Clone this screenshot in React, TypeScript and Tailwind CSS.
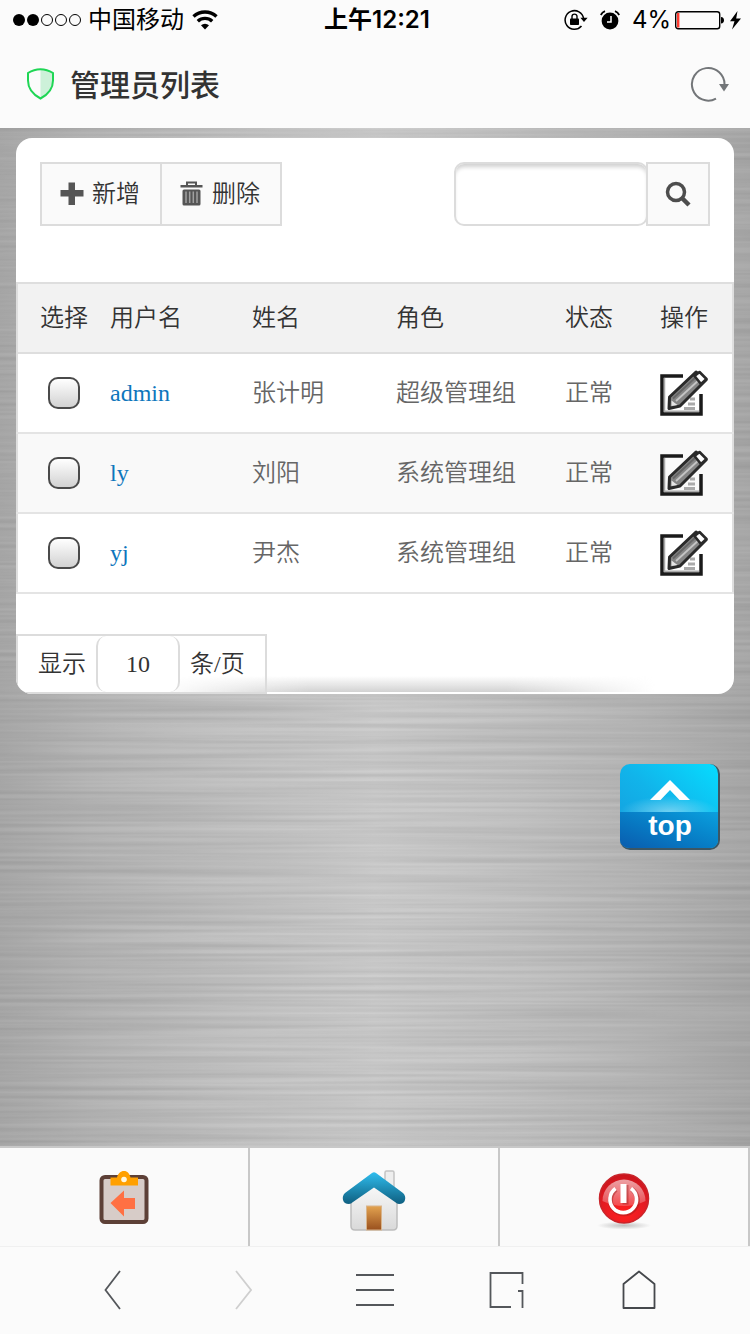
import { useState } from "react";

type User = { login: string; name: string; role: string; status: string };

const USERS: User[] = [
  { login: "admin", name: "张计明", role: "超级管理组", status: "正常" },
  { login: "ly", name: "刘阳", role: "系统管理组", status: "正常" },
  { login: "yj", name: "尹杰", role: "系统管理组", status: "正常" },
];

function BrushedMetal() {
  return (
    <svg className="absolute inset-0 h-full w-full" aria-hidden="true">
      <defs>
        <linearGradient id="metal" x1="0" y1="0" x2="1" y2="0">
          <stop offset="0" stopColor="#ababab" />
          <stop offset="0.12" stopColor="#b7b7b7" />
          <stop offset="0.3" stopColor="#c3c3c3" />
          <stop offset="0.5" stopColor="#cecece" />
          <stop offset="0.7" stopColor="#c3c3c3" />
          <stop offset="0.88" stopColor="#b6b6b6" />
          <stop offset="1" stopColor="#ababab" />
        </linearGradient>
        <filter id="brush" x="0" y="0" width="100%" height="100%" colorInterpolationFilters="sRGB">
          <feTurbulence type="fractalNoise" baseFrequency="0.003 0.24" numOctaves="2" seed="4" />
          <feColorMatrix values="0 0 0 0 0.35  0 0 0 0 0.35  0 0 0 0 0.35  0.3 0 0 0 -0.08" />
        </filter>
      </defs>
      <rect width="100%" height="100%" fill="url(#metal)" />
      <rect width="100%" height="100%" filter="url(#brush)" />
    </svg>
  );
}

function StatusBar() {
  return (
    <div className="relative flex h-10 items-center justify-between pl-3 pr-2 font-['Inter','Noto_Sans_CJK_SC',sans-serif] text-2xl text-black">
      <div className="flex items-center">
        <svg width="70" height="14" viewBox="0 0 70 14" aria-hidden="true">
          <circle cx="7" cy="7" r="6" />
          <circle cx="21" cy="7" r="6" />
          <g fill="none" stroke="#000">
            <circle cx="35" cy="7" r="5.5" />
            <circle cx="49" cy="7" r="5.5" />
            <circle cx="63" cy="7" r="5.5" />
          </g>
        </svg>
        <span className="ml-[6px]">中国移动</span>
        <svg className="ml-2" width="26" height="20" viewBox="0 0 26 20" fill="none" stroke="#000" strokeWidth="3.400" aria-hidden="true">
          <path d="M1.5 6.5a17 17 0 0 1 23 0" />
          <path d="M5.8 11.2a10.5 10.5 0 0 1 14.4 0" />
          <path d="M9 15.2a6 6 0 0 1 8 0L13 19.5z" fill="#000" stroke="none" />
        </svg>
      </div>
      <div className="absolute left-1/2 -translate-x-1/2 whitespace-nowrap pl-1 font-semibold">上午12:21</div>
      <div className="flex items-center">
        <svg width="24" height="22" viewBox="0 0 24 22" aria-hidden="true">
          <path d="M19.6 9.5A9.3 9.3 0 1 0 17.5 17" fill="none" stroke="#000" strokeWidth="1.5" />
          <path d="M16.4 8.8h7.2L20 13z" />
          <rect x="6" y="9.5" width="9" height="6.5" rx="0.8" />
          <path d="M8 10V7.6a2.5 2.5 0 0 1 5 0V10" fill="none" stroke="#000" strokeWidth="1.4" />
        </svg>
        <svg className="ml-3" width="20" height="20" viewBox="0 0 20 20" aria-hidden="true">
          <circle cx="10" cy="11" r="8.4" />
          <path d="M.8 5A8 8 0 0 1 5 1.2M15 1.2A8 8 0 0 1 19.200 5" fill="none" stroke="#000" strokeWidth="1.8" />
          <path d="M11 6v6H7" fill="none" stroke="#fff" strokeWidth="1.5" />
        </svg>
        <span className="ml-3">4%</span>
        <svg className="ml-1" width="67" height="20" viewBox="0 0 67 20" aria-hidden="true">
          <rect x="0.700" y="1.700" width="44" height="17" rx="2.500" fill="none" stroke="#000" strokeWidth="1.4" />
          <rect x="2" y="3" width="2.400" height="14.500" fill="#ff3b30" />
          <path d="M46 7c2 0 3 1.400 3 3.200s-1 3.200-3 3.200z" />
          <path d="M62.500 1 55 11.200h4.500L57 19.500l9-11h-4.800z" />
        </svg>
      </div>
    </div>
  );
}

function PlusIcon() {
  return (
    <svg width="24" height="24" viewBox="0 0 24 24" fill="#555" aria-hidden="true">
      <path d="M8.500 0.500h6.500v7.500H23.500v6.500h-8.500V23H8.500v-8.500H0.500V8H8.500z" />
    </svg>
  );
}

function TrashIcon() {
  return (
    <svg width="24" height="26" viewBox="0 0 24 26" aria-hidden="true">
      <path d="M7 4.500V1.500h9v3" fill="none" stroke="#555" strokeWidth="2" />
      <path d="M0.500 4h22v2.500h-22z" fill="#555" />
      <rect x="2.500" y="8.500" width="18" height="16" rx="1.500" fill="#555" />
      <path d="M6 10.500v11.500M9.700 10.500v11.500M13.300 10.500v11.500M17 10.500v11.500" stroke="#a0a0a0" strokeWidth="1.500" />
    </svg>
  );
}

function EditIcon() {
  return (
    <svg width="48" height="46" viewBox="0 0 48 46" aria-hidden="true">
      <path d="M23 6H2v38h39V24" fill="none" stroke="#1a1a1a" strokeWidth="3.500" />
      <path d="M4.500 8v33.200H39" fill="none" stroke="#aaa" strokeWidth="1.500" />
      <path d="M30 29h5M28 34h7M24 38.500h11" stroke="#aaa" strokeWidth="3" />
      <path d="M9.500 27 36 2l10 8-26 26-11 2.500z" fill="#858585" stroke="#2a2a2a" strokeWidth="3" strokeLinejoin="round" />
      <path d="m13 28.500 24-22.500" stroke="#666" strokeWidth="2" />
      <path d="m16 31 24-22" stroke="#c4c4c4" strokeWidth="1.800" />
      <path d="m34.500 6 5-4 7 7-5.500 5z" fill="#fff" stroke="#2a2a2a" strokeWidth="2.600" strokeLinejoin="round" />
      <path d="m11.500 30.500 6 4.500-6 1z" fill="#e5e5e5" />
    </svg>
  );
}

function ClipboardIcon() {
  return (
    <svg width="52" height="56" viewBox="0 0 52 56" aria-hidden="true">
      <rect x="3.500" y="8" width="45" height="45" rx="3.500" fill="#d7ccc8" stroke="#5d4037" strokeWidth="4" />
      <path d="M12.500 16.500V8.500h6.500C20 4.500 22.500 2 26 2S31.500 4.500 32.500 8.500h7.500v8z" fill="#ffa000" />
      <circle cx="26" cy="10.500" r="2.800" fill="#fff8e1" />
      <path d="M12.500 34 26 21.500v7.500H37v11H26v7.500z" fill="#ff7043" />
    </svg>
  );
}

function HouseIcon() {
  return (
    <svg width="64" height="62" viewBox="0 0 64 62" aria-hidden="true">
      <defs>
        <linearGradient id="roof" x1="0" y1="0" x2="0" y2="1">
          <stop offset="0" stopColor="#2fbdee" />
          <stop offset="1" stopColor="#0f5f80" />
        </linearGradient>
        <linearGradient id="door" x1="0" y1="0" x2="0" y2="1">
          <stop offset="0" stopColor="#e3a350" />
          <stop offset="1" stopColor="#99501e" />
        </linearGradient>
        <linearGradient id="wall" x1="0" y1="0" x2="0" y2="1">
          <stop offset="0" stopColor="#fafafa" />
          <stop offset="1" stopColor="#d9d9d9" />
        </linearGradient>
      </defs>
      <rect x="43" y="1" width="9" height="20" rx="1.500" fill="#eee" stroke="#c4c4c4" strokeWidth="1.500" />
      <path d="M9 32 32 13l23 19v24q0 4-4 4H13q-4 0-4-4z" fill="url(#wall)" stroke="#bdbdbd" strokeWidth="1.500" />
      <path d="M30 3q2-1.500 4 0l27 20q3 3 2 7-1 4-6 4-2 0-4-2L32 17.500 11 32q-2 2-4 2-5 0-6-4-1-4 2-7z" fill="url(#roof)" />
      <rect x="24.500" y="36" width="15" height="24" fill="url(#door)" stroke="#d8b48c" strokeWidth="1" />
    </svg>
  );
}

function PowerIcon() {
  return (
    <svg width="56" height="58" viewBox="0 0 56 58" aria-hidden="true">
      <defs>
        <radialGradient id="red" cx="0.500" cy="0.800" r="0.800">
          <stop offset="0" stopColor="#ff2020" />
          <stop offset="0.600" stopColor="#e31b23" />
          <stop offset="1" stopColor="#c9141c" />
        </radialGradient>
        <linearGradient id="gloss" x1="0" y1="0" x2="0" y2="1">
          <stop offset="0" stopColor="#fff" stopOpacity="0.600" />
          <stop offset="1" stopColor="#fff" stopOpacity="0.200" />
        </linearGradient>
        <radialGradient id="shade">
          <stop offset="0" stopColor="#999" stopOpacity="0.600" />
          <stop offset="1" stopColor="#999" stopOpacity="0" />
        </radialGradient>
      </defs>
      <ellipse cx="28" cy="53.500" rx="27" ry="4" fill="url(#shade)" />
      <circle cx="28" cy="26.500" r="24.500" fill="url(#red)" stroke="#c9252b" strokeWidth="1.500" />
      <path d="M6.500 29a21.500 21.500 0 1 1 43 0q-10 5-21.500 5T6.500 29z" fill="url(#gloss)" />
      <path d="M20 17.500a13.500 13.500 0 1 0 16 0" fill="none" stroke="#9b1c1c" strokeOpacity="0.450" strokeWidth="5" />
      <path d="M26.500 13h6v19.500h-6z" fill="#9b1c1c" fillOpacity="0.450" />
      <path d="M19.500 16.500a13.300 13.300 0 1 0 15.500 0" fill="none" stroke="#fff" strokeWidth="3.600" />
      <path d="M24.500 12h6v19h-6z" fill="#fff" />
    </svg>
  );
}

export default function App() {
  const [query, setQuery] = useState("");
  const [pageSize, setPageSize] = useState("10");
  const toolButton = "flex items-center gap-2 border-2 border-[#dcdcdc] bg-[#fafafa] pl-[18px] pr-5";

  return (
    <div className="flex min-h-screen flex-col bg-[#fbfbfb] font-['Noto_Sans','Noto_Sans_CJK_SC',sans-serif]">
      <StatusBar />
      <header className="flex h-[88px] items-center pl-[27px] pr-5">
        <svg width="27" height="32" viewBox="0 0 27 32" aria-hidden="true">
          <path d="M13.500 1.500Q20 1.500 25.500 5v7c0 8-4 14-12 18.500z" fill="#cdf1d9" />
          <path d="M13.500 1.200Q20 1.200 26 5v7.500c0 7.500-5 14-12.500 18C6 26.500 1 20 1 12.500V5q6-3.800 12.500-3.800z" fill="none" stroke="#1fd655" strokeWidth="2" />
        </svg>
        <h1 className="ml-4 pt-[2px] text-[30px] font-medium leading-10 text-[#333]">管理员列表</h1>
        <button type="button" aria-label="刷新" className="ml-auto">
          <svg width="40" height="36" viewBox="0 0 40 36" aria-hidden="true">
            <path d="M34.500 19A16.300 16.300 0 1 0 26 32.600" fill="none" stroke="#737679" strokeWidth="2" />
            <path d="M29 18h10l-5 7.500z" fill="#737679" />
          </svg>
        </button>
      </header>

      <main className="relative flex flex-1 flex-col px-4 pt-[10px]">
        <BrushedMetal />
        <section className="relative overflow-hidden rounded-2xl bg-white font-['Liberation_Serif','Noto_Sans_CJK_SC',serif] text-2xl font-[350] text-[#333]">
          <div className="flex justify-between px-6 pt-6">
            <div className="flex h-16">
              <button type="button" className={toolButton}>
                <PlusIcon />
                新增
              </button>
              <button type="button" className={toolButton + " -ml-[2px]"}>
                <TrashIcon />
                删除
              </button>
            </div>
            <form className="flex h-16" onSubmit={(e) => e.preventDefault()}>
              <input
                type="search"
                aria-label="搜索"
                value={query}
                onChange={(e) => setQuery(e.target.value)}
                className="w-[194px] appearance-none rounded-[10px] border-2 border-[#dcdcdc] bg-white px-3 shadow-[inset_0_5px_4px_-2px_#d0d0d0] outline-none"
              />
              <button type="submit" aria-label="查找" className="-ml-[2px] flex w-16 items-center justify-center border-2 border-[#dcdcdc] bg-[#fafafa]">
                <svg width="26" height="26" viewBox="0 0 26 26" fill="none" stroke="#4d4d4d" aria-hidden="true">
                  <circle cx="11" cy="11" r="8.500" strokeWidth="3.500" />
                  <path d="m17 17 7 7" strokeWidth="4.500" />
                </svg>
              </button>
            </form>
          </div>

          <table className="mt-14 w-full table-fixed border-collapse border-2 border-[#dedede] text-left">
            <thead className="bg-[#f2f2f2]">
              <tr className="h-[70px] border-b-2 border-[#dedede]">
                <th className="w-[83px] pl-[22px] font-[350]">选择</th>
                <th className="w-[142px] pl-[10px] font-[350]">用户名</th>
                <th className="w-[144px] pl-[10px] font-[350]">姓名</th>
                <th className="pl-[10px] font-[350]">角色</th>
                <th className="w-[95px] pl-[10px] font-[350]">状态</th>
                <th className="w-[83px] pl-[10px] font-[350]">操作</th>
              </tr>
            </thead>
            <tbody className="text-[#666]">
              {USERS.map((user) => (
                <tr key={user.login} className="h-20 border-b-2 border-[#e4e4e4] even:bg-[#f9f9f9]">
                  <td className="pl-[30px]">
                    <input
                      type="checkbox"
                      aria-label={"选择 " + user.login}
                      className="block size-8 appearance-none rounded-[10px] border-2 border-[#4a4a4a] bg-linear-to-b from-white to-[#d2d2d2] checked:from-[#9cc8e8] checked:to-[#0e76bc]"
                    />
                  </td>
                  <td className="pl-[10px]">
                    <a href={"#" + user.login} className="text-[#0e76bc]">{user.login}</a>
                  </td>
                  <td className="pl-[10px]">{user.name}</td>
                  <td className="pl-[10px]">{user.role}</td>
                  <td className="pl-[10px]">{user.status}</td>
                  <td className="pl-[10px]">
                    <button type="button" aria-label={"编辑 " + user.login} className="block">
                      <EditIcon />
                    </button>
                  </td>
                </tr>
              ))}
            </tbody>
          </table>

          <div className="relative mt-10 flex h-[60px]">
            <div className="absolute bottom-[2px] left-[20%] h-4 w-[69%] bg-linear-to-t from-[#d2d2d2] to-transparent mask-x-from-70% mask-x-to-100%" />
            <label className="relative flex items-center border-2 border-[#dcdcdc] pl-5 pr-5">
              显示
              <input
                type="text"
                inputMode="numeric"
                value={pageSize}
                onChange={(e) => setPageSize(e.target.value)}
                className="ml-[10px] mr-[10px] h-14 w-[84px] rounded-[10px] border-x-2 border-[#dcdcdc] bg-white text-center outline-none"
              />
              条/页
            </label>
          </div>
        </section>

        <button
          type="button"
          onClick={() => window.scrollTo({ top: 0 })}
          className="relative mr-[14px] mt-[70px] flex h-[86px] w-[100px] flex-col items-center self-end overflow-hidden rounded-[10px] border-b-2 border-r-2 border-[#3d5663] bg-linear-to-tr from-[#159bdc] via-[#11b4ea] to-[#06dcff] pl-[2px] pt-4 font-['Liberation_Sans',sans-serif] text-[28px] font-bold leading-8 text-white"
        >
          <span className="absolute inset-x-0 bottom-0 h-9 bg-linear-to-tr from-[#0a5cae] to-[#0ba0de]" />
          <span className="absolute inset-x-0 bottom-9 h-4 bg-[radial-gradient(ellipse_50%_100%_at_50%_100%,#ffffff66,transparent)]" />
          <svg className="relative" width="40" height="20" viewBox="0 0 40 20" fill="#fff" aria-hidden="true">
            <path d="M20 0 40 20H29.500L20 10l-9.500 10H0z" />
          </svg>
          <span className="relative mt-[10px]">top</span>
        </button>
      </main>

      <nav className="grid h-[100px] grid-cols-3 border-t-2 border-[#c8c8c8] bg-[#fafafa]">
        <a href="#back" aria-label="返回" className="flex items-center justify-center border-r-2 border-[#c8c8c8]">
          <ClipboardIcon />
        </a>
        <a href="#home" aria-label="首页" className="flex items-center justify-center border-r-2 border-[#c8c8c8] pt-2">
          <HouseIcon />
        </a>
        <a href="#exit" aria-label="退出" className="flex items-center justify-center border-r-2 border-[#c8c8c8] pt-2">
          <PowerIcon />
        </a>
      </nav>

      <nav className="grid h-[88px] grid-cols-5 items-center justify-items-center border-t border-[#f0f0f0] bg-[#fbfbfb] px-[46px] pb-[2px]">
        <button type="button" aria-label="后退">
          <svg width="18" height="40" viewBox="0 0 18 40" fill="none" stroke="#54575b" strokeWidth="1.800" aria-hidden="true">
            <path d="M17 1 2.500 20l14.500 19" />
          </svg>
        </button>
        <button type="button" aria-label="前进">
          <svg width="18" height="40" viewBox="0 0 18 40" fill="none" stroke="#cfcfcf" strokeWidth="1.800" aria-hidden="true">
            <path d="M2 1 17 20 2 39" />
          </svg>
        </button>
        <button type="button" aria-label="菜单">
          <svg width="38" height="34" viewBox="0 0 38 34" stroke="#54575b" strokeWidth="2" aria-hidden="true">
            <path d="M0 2h38M0 17h38M0 32h38" />
          </svg>
        </button>
        <button type="button" aria-label="标签页">
          <svg width="36" height="38" viewBox="0 0 36 38" fill="none" stroke="#54575b" strokeWidth="1.800" aria-hidden="true">
            <path d="M33.500 13V2H1.500v34H22M29 20h4.500v17" />
          </svg>
        </button>
        <button type="button" aria-label="主页">
          <svg width="36" height="40" viewBox="0 0 36 40" fill="none" stroke="#45484c" strokeWidth="1.800" strokeLinejoin="round" aria-hidden="true">
            <path d="M19 1.500 34.500 14v24h-31V14z" />
          </svg>
        </button>
      </nav>
    </div>
  );
}
